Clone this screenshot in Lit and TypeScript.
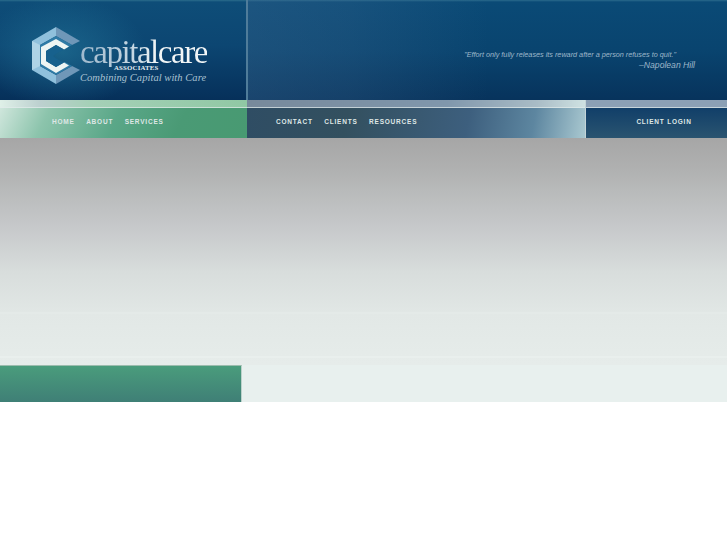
import { LitElement, html, css } from "lit";
import { customElement } from "lit/decorators.js";

@customElement("app-root")
export class AppRoot extends LitElement {
  static styles = css`
    :host { display: block; width: 727px; height: 545px; background: #fff; font-family: "Liberation Sans", Arial, sans-serif; overflow: hidden; }
    .header { display: grid; grid-template-columns: 248px 1fr; height: 100px; }
    .brand {
      display: flex; align-items: flex-start; padding: 26px 0 0 31px; box-sizing: border-box;
      background:
        radial-gradient(ellipse 85px 55px at 62px 52px, rgba(35,120,155,.6), rgba(35,120,155,0) 100%),
        linear-gradient(180deg, #2b6c8c 0, #0e4d78 2px, #0c4672 45%, #06305a 100%);
      border-right: 2px solid #4f7c9a;
    }
    .hex { width: 50px; height: 60px; flex: none; }
    .word { display: flex; flex-direction: column; margin-left: -1px; color: #dfeaf0; }
    .name { font: 33px/30px "Liberation Serif", serif; letter-spacing: -1.45px; margin-top: 11px; white-space: nowrap;
      background: linear-gradient(90deg, #9fb9cd 0, #c8d9e4 45%, #f2f6f7 60%, #f2f6f7 100%); -webkit-background-clip: text; background-clip: text; color: transparent; }
    .assoc { font: bold 6.8px/8px "Liberation Serif", serif; letter-spacing: .2px; margin: -3px 0 0 34px; color: #e6eef2; white-space: nowrap; }
    .tag { font: italic 10.5px/11px "Liberation Serif", serif; letter-spacing: .05px; color: #a9c3d2; white-space: nowrap; }
    .quote-panel {
      display: flex; flex-direction: column; align-items: flex-end; padding: 49px 32px 0 0; box-sizing: border-box;
      background:
        linear-gradient(90deg, rgba(70,110,150,.3) 0, rgba(70,110,150,.22) 100px, rgba(70,110,150,0) 240px),
        linear-gradient(180deg, #2a6a8c 0, #0a4a76 2px, #09446f 50%, #07335c 100%);
      color: #9fb8ca; font-style: italic;
    }
    .quote { font-size: 7.25px; line-height: 11px; white-space: nowrap; margin-right: 19px; }
    .author { font-size: 8.6px; line-height: 11px; }
    .nav { display: grid; grid-template-columns: 247px 338px 142px; height: 38px; }
    .col { display: flex; flex-direction: column; }
    .strip { height: 7px; border-bottom: 1px solid rgba(225,235,235,.7); }
    .links { flex: 1; display: flex; align-items: center; gap: 11.5px; font-size: 6.5px; font-weight: bold; letter-spacing: .78px; color: #dfe7e6; padding-bottom: 4px; box-sizing: border-box; }
    .green .strip { background: linear-gradient(90deg, #dff0e8 0, #bcd0cf 40px, #a5d0b7 90px, #90c8a4 100%); }
    .green .links { padding-left: 52px; background: linear-gradient(115deg, #cfe6dc 0, #8cc4ac 45px, #5aa788 110px, #4a9a75 170px, #489a72 100%); }
    .blue .strip { background: linear-gradient(90deg, #77899b 0, #8097ac 200px, #a9bcc6 290px, #cfe2e2 100%); }
    .blue .links { padding-left: 29px; background: linear-gradient(100deg, #2f4d64 0, #33505f 100px, #3d5f7e 220px, #5d86a0 285px, #a9c8d0 100%); }
    .dark { border-left: 1px solid #c4d4d8; box-sizing: border-box; }
    .dark .strip { background: #8ba0b5; }
    .dark .links { justify-content: center; background: linear-gradient(180deg, #113f69 0, #2a5470 100%); padding-left: 15px; }
    .fade { height: 227px; display: flex; flex-direction: column; justify-content: flex-end; background: linear-gradient(180deg, #a6a6a6 0, #b0b1b1 32px, #b8baba 52px, #c6c8ca 88px, #d8dddc 134px, #e1e7e5 174px, #e4eae8 174px, #e4eae8 176px, #e2e8e6 176px, #e6ecea 227px); }
    .line { height: 2px; background: #e9efed; margin-bottom: 7px; }
    .foot { display: grid; grid-template-columns: 242px 1fr; height: 37px; background: #e8f0ee; }
    .box { background: linear-gradient(180deg, #4a9c7c 0, #3f7f76 100%); border-top: 1px solid #9cbcae; border-right: 1px solid #bcd2cb; box-sizing: border-box; }
  `;

  render() {
    return html`
      <div class="header">
        <div class="brand">
          <svg class="hex" viewBox="0 0 50 60" aria-hidden="true">
            <polygon points="25,1 1,15 1,44 25,58 25,49 9,40 9,19 25,10" fill="#8fc0dc"/>
            <polygon points="25,1 49,15 41,19 25,10" fill="#6f97b8"/>
            <polygon points="25,58 49,44 41,40 25,49" fill="#6f97b8"/>
            <polygon points="1,15 9,19 9,40 1,44" fill="#aed3e6"/>
            <polygon points="25,10 41,19 34,23 25,18 16,23 16,36 25,41 34,36 41,40 25,49 9,40 9,19" fill="#2f7aa5"/>
            <polygon points="25,13 38,20.500 33,23.500 25,19 15,25 15,35 25,41 33,36.500 38,39.500 25,47 10,38 10,21" fill="#eef5f3"/>
            <polygon points="25,19 15,25 15,35 25,41 33,36.500 26,33 22,30 26,27 33,23.500" fill="#17618d"/>
          </svg>
          <div class="word">
            <div class="name">capitalcare</div>
            <div class="assoc">ASSOCIATES</div>
            <div class="tag">Combining Capital with Care</div>
          </div>
        </div>
        <div class="quote-panel">
          <div class="quote">"Effort only fully releases its reward after a person refuses to quit."</div>
          <div class="author">–Napolean Hill</div>
        </div>
      </div>
      <div class="nav">
        <div class="col green"><div class="strip"></div><div class="links"><span>HOME</span><span>ABOUT</span><span>SERVICES</span></div></div>
        <div class="col blue"><div class="strip"></div><div class="links"><span>CONTACT</span><span>CLIENTS</span><span>RESOURCES</span></div></div>
        <div class="col dark"><div class="strip"></div><div class="links"><span>CLIENT LOGIN</span></div></div>
      </div>
      <div class="fade"><div class="line"></div></div>
      <div class="foot"><div class="box"></div><div></div></div>
    `;
  }
}
